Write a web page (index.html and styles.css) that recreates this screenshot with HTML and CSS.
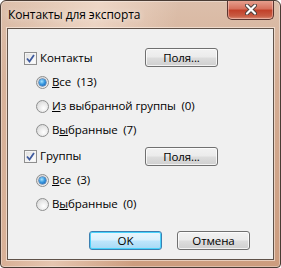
FILE: index.html
```html
<!DOCTYPE html>
<html lang="ru">
<head>
<meta charset="utf-8">
<link rel="stylesheet" href="styles.css">
</head>
<body>
<div class="window">
  <div class="titlebar">
    <span class="title">Контакты для экспорта</span>
    <div class="close">
      <svg width="12" height="11" viewBox="0 0 12 11">
        <path d="M2 1.5 L10 9.5 M10 1.5 L2 9.5" stroke="#4b3f3c" stroke-width="4" stroke-linecap="round" fill="none"/>
        <path d="M2 1.5 L10 9.5 M10 1.5 L2 9.5" stroke="#ffffff" stroke-width="2.2" stroke-linecap="round" fill="none"/>
      </svg>
    </div>
  </div>
  <div class="client">
    <div class="group">
      <div class="row head first">
        <label class="item"><span class="check on"><svg width="9" height="9" viewBox="0 0 9 9"><path d="M1 4.5 L3.5 7.5 L8 1" stroke="#3e5a9e" stroke-width="1.8" fill="none"/></svg></span><span class="txt">Контакты</span></label>
        <div class="btn">Поля...</div>
      </div>
      <div class="row sub"><label class="item"><span class="radio on"></span><span class="txt"><u>В</u>се  (13)</span></label></div>
      <div class="row sub"><label class="item"><span class="radio"></span><span class="txt"><u>И</u>з выбранной группы  (0)</span></label></div>
      <div class="row sub"><label class="item"><span class="radio"></span><span class="txt">В<u>ы</u>бранные  (7)</span></label></div>
    </div>
    <div class="group second">
      <div class="row head">
        <label class="item"><span class="check on"><svg width="9" height="9" viewBox="0 0 9 9"><path d="M1 4.5 L3.5 7.5 L8 1" stroke="#3e5a9e" stroke-width="1.8" fill="none"/></svg></span><span class="txt">Группы</span></label>
        <div class="btn">Поля...</div>
      </div>
      <div class="row sub"><label class="item"><span class="radio on"></span><span class="txt"><u>В</u>се  (3)</span></label></div>
      <div class="row sub"><label class="item"><span class="radio"></span><span class="txt">В<u>ы</u>бранные  (0)</span></label></div>
    </div>
    <div class="footer">
      <div class="btn default">OK</div>
      <div class="btn">Отмена</div>
    </div>
  </div>
</div>
</body>
</html>
```

FILE: styles.css
```css
* { box-sizing: border-box; }
html, body { margin: 0; padding: 0; background: #ffffff; }
body {
  font-family: "Open Sans", "Noto Sans", "Liberation Sans", sans-serif;
  font-size: 11.5px;
  letter-spacing: -0.1px;
  color: #000;
}
.window {
  width: 281px;
  height: 268px;
  border: 1px solid #4a3c34;
  border-radius: 6px 6px 4px 4px;
  background:
    linear-gradient(100deg, rgba(255,255,255,0.0) 0%, rgba(255,238,225,0.5) 30%, rgba(255,255,255,0.0) 55%),
    linear-gradient(180deg, #dcbfab 0%, #d4ad94 30%, #cc9c7e 100%);
  box-shadow: inset 0 0 0 1px rgba(255,255,255,0.35);
  overflow: hidden;
  display: flex;
  flex-direction: column;
}
.titlebar {
  height: 27px;
  display: flex;
  justify-content: space-between;
  align-items: flex-start;
  padding-left: 7px;
}
.title {
  margin-top: 5px;
  line-height: 17px;
  font-size: 12px;
  color: #000;
  text-shadow: 0 0 6px rgba(255,255,255,0.8);
}
.close {
  width: 47px;
  height: 20px;
  margin-top: -1px;
  margin-right: 6px;
  border: 1px solid #5b3530;
  border-top: none;
  border-radius: 0 0 5px 5px;
  background: linear-gradient(180deg, #e8a493 0%, #d7725e 45%, #c2412a 55%, #c85c44 85%, #dc8f77 100%);
  box-shadow: inset 0 0 0 1px rgba(255,220,210,0.45);
  display: flex;
  align-items: center;
  justify-content: center;
}
.client {
  margin-left: 6px;
  width: 267px;
  height: 232px;
  border: 1px solid #5f5249;
  box-shadow: 0 0 0 1px rgba(255,245,238,0.55);
  background: #f0f0f0;
  padding: 17px 0 0 16px;
  display: flex;
  flex-direction: column;
}
.group.second { margin-top: 2px; }
.row {
  height: 24px;
  display: flex;
  align-items: center;
}
.row.head {
  display: grid;
  grid-template-columns: 121px 73px;
  align-items: center;
}
.row.head.first .btn { margin-top: -2px; }
.row.sub { padding-left: 12px; }
.item {
  display: flex;
  align-items: center;
  gap: 3px;
}
.txt { white-space: pre; line-height: 16px; }
.txt u { text-underline-offset: 1px; }
.check {
  width: 13px;
  height: 13px;
  border: 1px solid #8f8f8f;
  background: linear-gradient(135deg, #dcdcdc 0%, #f4f4f4 60%, #ffffff 100%);
  box-shadow: inset 0 0 0 1px #f4f4f4;
  display: flex;
  align-items: center;
  justify-content: center;
}
.radio {
  width: 13px;
  height: 13px;
  border-radius: 50%;
  border: 1px solid #8e8f8f;
  background: radial-gradient(circle at 60% 65%, #ffffff 0%, #e8e8e8 50%, #cfcfcf 100%);
  position: relative;
}
.radio.on::after {
  content: "";
  position: absolute;
  left: 2px;
  top: 2px;
  width: 7px;
  height: 7px;
  border-radius: 50%;
  background: radial-gradient(circle at 40% 35%, #a8e4ff 0%, #3a9ae0 45%, #0b4fa6 100%);
  box-shadow: 0 0 0 0.5px #1c4f8c;
}
.btn {
  width: 73px;
  height: 19px;
  border: 1px solid #707070;
  border-radius: 3px;
  background: linear-gradient(180deg, #f2f2f2 0%, #ebebeb 48%, #dddddd 52%, #cfcfcf 100%);
  box-shadow: inset 0 0 0 1px rgba(255,255,255,0.75);
  display: flex;
  align-items: center;
  justify-content: center;
  line-height: 15px;
}
.btn.default {
  border-color: #3c7fb1;
  background: linear-gradient(180deg, #eaf6fd 0%, #d9f0fc 48%, #bee6fd 52%, #a7d9f5 100%);
  box-shadow: inset 0 0 0 1px #48d2fb;
}
.footer {
  margin-top: 15px;
  display: flex;
  gap: 15px;
  padding-left: 65px;
}
```
